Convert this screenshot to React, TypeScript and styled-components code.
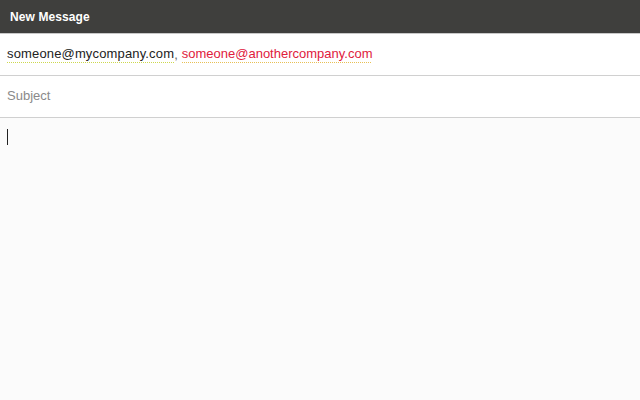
import styled, { createGlobalStyle } from 'styled-components'

const GlobalStyle = createGlobalStyle`
  html, body { margin: 0; padding: 0; background: #fbfbfb; }
  body { font-family: "Liberation Sans", Arial, sans-serif; }
`

const Window = styled.div`
  width: 640px; height: 400px;
  display: flex; flex-direction: column;
  background: #fbfbfb;
`

const TitleBar = styled.header`
  height: 33px;
  background: #3f3f3d;
  border-bottom: 1px solid #c8c8c8;
  display: flex; align-items: center;
  padding: 0 10px;
  color: #fff;
  font-size: 12px; font-weight: 700;
  letter-spacing: 0.1px;
`

const Field = styled.div`
  height: 41px;
  border-bottom: 1px solid #d0d0d0;
  background: #fff;
  display: flex; align-items: center;
  padding: 0 7px;
  font-size: 13px;
`

// spell-check style squiggle: a faint dotted line under each address
const Recipient = styled.span<{ $bad?: boolean }>`
  color: ${p => (p.$bad ? '#e0203c' : '#222')};
  letter-spacing: ${p => (p.$bad ? '0' : '0.15px')};
  padding-bottom: 2px;
  background-image: linear-gradient(
    to right,
    ${p => (p.$bad ? '#e8c055' : '#cdd84e')} 50%,
    transparent 50%
  );
  background-size: 2px 1px;
  background-repeat: repeat-x;
  background-position: 0 100%;
  line-height: 15px;
`

const Sep = styled.span`
  color: #666;
  margin-right: 4px;
`

const Placeholder = styled.span`
  color: #8a8a8a;
  margin-top: -2px;
`

const Body = styled.div`
  flex: 1;
  padding: 11px 7px;
`

const Caret = styled.div`
  width: 1px; height: 16px;
  background: #222;
`

export default function App() {
  return (
    <>
      <GlobalStyle />
      <Window>
        <TitleBar>New Message</TitleBar>
        <Field>
          <Recipient>someone@mycompany.com</Recipient>
          <Sep>,</Sep>
          <Recipient $bad>someone@anothercompany.com</Recipient>
        </Field>
        <Field>
          <Placeholder>Subject</Placeholder>
        </Field>
        <Body>
          <Caret />
        </Body>
      </Window>
    </>
  )
}
